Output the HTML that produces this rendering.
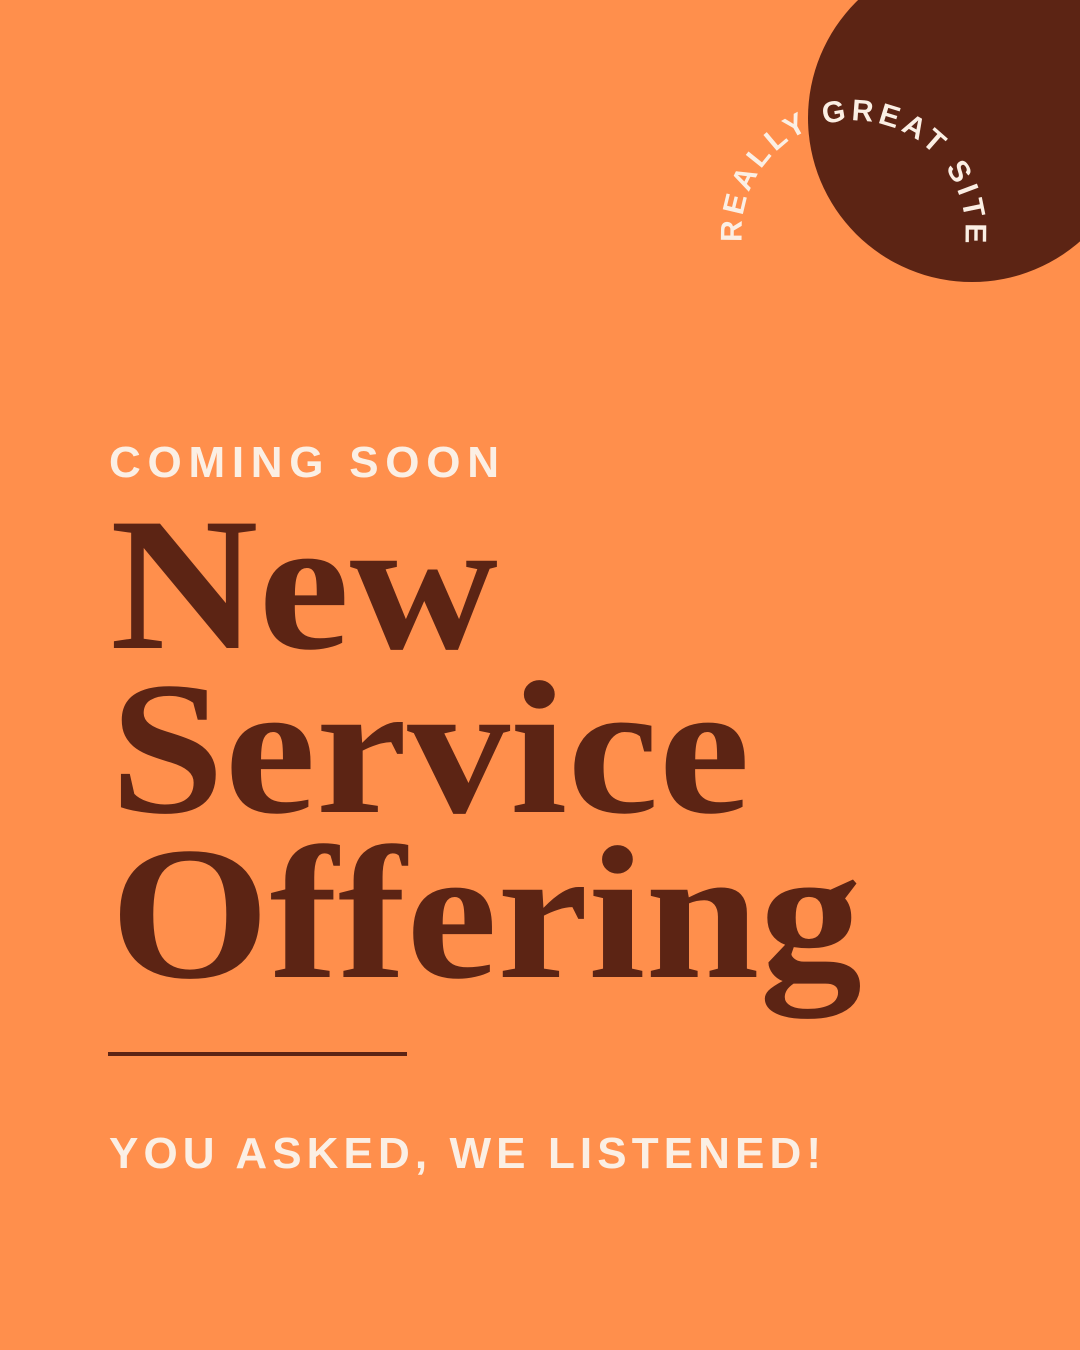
<!DOCTYPE html>
<html><head><meta charset="utf-8"><style>
html,body{margin:0;padding:0;background:#FF8F4C;}
svg{display:block;}
</style></head><body>
<svg width="1080" height="1350" viewBox="0 0 1080 1350" xmlns="http://www.w3.org/2000/svg">
<rect width="1080" height="1350" fill="#FF8F4C"/>
<circle cx="972" cy="118" r="164" fill="#5C2414"/>
<defs><path id="arc" d="M 742,242 A 112 112 0 1 1 955,280"/></defs>
<text font-family="Liberation Sans, sans-serif" font-weight="bold" font-size="30" fill="#FBEFE4">
<textPath href="#arc" textLength="372" lengthAdjust="spacing">REALLY GREAT SITE</textPath></text>
<text x="109" y="477" font-family="Liberation Sans, sans-serif" font-weight="bold" font-size="44" fill="#FBEFE4" textLength="390" lengthAdjust="spacing">COMING SOON</text>
<g font-family="Liberation Serif, serif" font-weight="bold" fill="#5C2414" font-size="190">
<text x="110" y="648" textLength="388" lengthAdjust="spacingAndGlyphs">New</text>
<text x="110" y="812" textLength="640" lengthAdjust="spacingAndGlyphs">Service</text>
<text x="110" y="977" textLength="752" lengthAdjust="spacingAndGlyphs">Offering</text>
</g>
<rect x="108" y="1052" width="299" height="4" fill="#5C2414"/>
<text x="109" y="1168" font-family="Liberation Sans, sans-serif" font-weight="bold" font-size="44" fill="#FBEFE4" textLength="712" lengthAdjust="spacing">YOU ASKED, WE LISTENED!</text>
</svg>
</body></html>
